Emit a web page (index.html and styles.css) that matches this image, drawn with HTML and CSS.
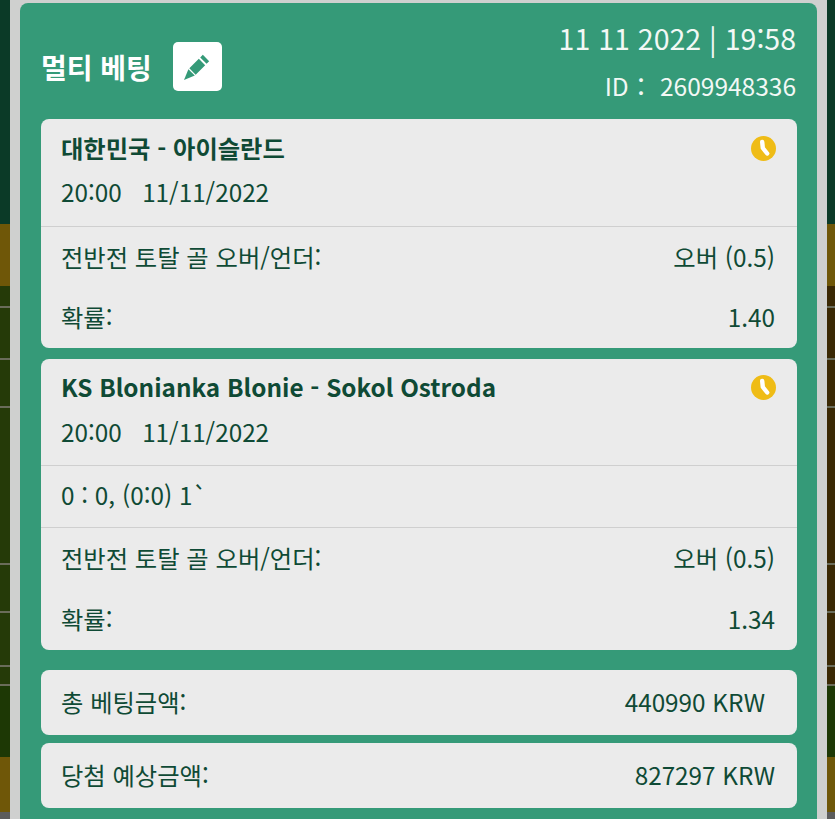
FILE: index.html
```html
<!DOCTYPE html>
<html lang="ko">
<head>
	<meta charset="UTF-8">
	<title>멀티 베팅</title>
	<link rel="stylesheet" href="styles.css">
</head>
<body>
	<div class="modal">
		<div class="ticket">
			<div class="head">
				<div class="head-left">
					<h1 class="head-title">멀티 베팅</h1>
					<span class="edit-btn">
						<svg width="28" height="28" viewBox="0 0 28 28">
							<path d="M9.5 18.5L19 9M20.4 7.6L23 5" fill="none" stroke="#359a78" stroke-width="9"/>
							<path d="M5.4 16.2L11.8 22.6L1 27z" fill="#359a78"/>
						</svg>
					</span>
				</div>
				<div class="head-right">
					<div class="head-date">11 11 2022 | 19:58</div>
					<div class="head-id">ID：&nbsp;2609948336</div>
				</div>
			</div>

			<div class="card">
				<div class="match">
					<div class="match-top">
						<div class="match-name">대한민국 - 아이슬란드</div>
						<svg class="clock" width="25" height="25" viewBox="0 0 25 25"><circle cx="12.5" cy="12.5" r="12.5" fill="#efbc16"/><path d="M11.2 6L11.8 12L16.2 17.5" fill="none" stroke="#fff" stroke-width="4.4" stroke-linecap="round" stroke-linejoin="round"/></svg>
					</div>
					<div class="match-time">20:00 &nbsp; 11/11/2022</div>
				</div>
				<div class="rows">
					<div class="row"><span>전반전 토탈 골 오버/언더:</span><span>오버 (0.5)</span></div>
					<div class="row"><span>확률:</span><span>1.40</span></div>
				</div>
			</div>

			<div class="card">
				<div class="match">
					<div class="match-top">
						<div class="match-name">KS Blonianka Blonie - Sokol Ostroda</div>
						<svg class="clock" width="25" height="25" viewBox="0 0 25 25"><circle cx="12.5" cy="12.5" r="12.5" fill="#efbc16"/><path d="M11.2 6L11.8 12L16.2 17.5" fill="none" stroke="#fff" stroke-width="4.4" stroke-linecap="round" stroke-linejoin="round"/></svg>
					</div>
					<div class="match-time">20:00 &nbsp; 11/11/2022</div>
				</div>
				<div class="score">0 : 0, (0:0) 1`</div>
				<div class="rows">
					<div class="row"><span>전반전 토탈 골 오버/언더:</span><span>오버 (0.5)</span></div>
					<div class="row"><span>확률:</span><span>1.34</span></div>
				</div>
			</div>

			<div class="total total-first"><span>총 베팅금액:</span><span class="total-stake">440990 KRW</span></div>
			<div class="total"><span>당첨 예상금액:</span><span>827297 KRW</span></div>
		</div>
	</div>
</body>
</html>
```

FILE: styles.css
```css
html, body {
	margin: 0;
	height: 100%;
}
body {
	overflow: hidden;
	font-family: "Noto Sans CJK KR", "Noto Sans", sans-serif;
	color: #0f4a35;
	/* the pitch behind the dialog: white lines, then left and right strips */
	background:
		linear-gradient(to bottom,
			transparent 306px, #6a6c5a 306px, #6a6c5a 308px,
			transparent 308px, transparent 358px, #6a6c5a 358px, #6a6c5a 360px,
			transparent 360px, transparent 406px, #6a6c5a 406px, #6a6c5a 408px,
			transparent 408px, transparent 563px, #6a6c5a 563px, #6a6c5a 565px,
			transparent 565px, transparent 611px, #6a6c5a 611px, #6a6c5a 613px,
			transparent 613px, transparent 665px, #6a6c5a 665px, #6a6c5a 667px,
			transparent 667px, transparent 684px, #6a6c5a 684px, #6a6c5a 686px,
			transparent 686px),
		linear-gradient(to bottom,
			#0b3a27 0, #0b3a27 224px,
			#6f5708 224px, #6f5708 286px,
			#253a08 286px, #253a08 685px,
			#1d3805 685px, #1d3805 757px,
			#6f5708 757px, #6f5708 812px,
			#5c5c5c 812px) left top / 10px 100% no-repeat,
		linear-gradient(to bottom,
			#0b3a27 0, #0b3a27 224px,
			#6f5708 224px, #6f5708 286px,
			#3a2803 286px, #3a2803 685px,
			#1d3805 685px, #1d3805 757px,
			#6f5708 757px, #6f5708 812px,
			#5c5c5c 812px) right top / 8px 100% no-repeat;
}
.modal {
	box-sizing: border-box;
	margin: 0 8px 0 10px;
	padding: 3px 10px 0;
	height: 100%;
	background: #cfd0cf;
}
.ticket {
	box-sizing: border-box;
	height: 100%;
	padding: 0 20px 0 21px;
	border-radius: 8px 8px 0 0;
	background: #359a78;
}
.head {
	display: flex;
	justify-content: space-between;
	height: 116px;
}
.head-left {
	display: flex;
	align-items: center;
	gap: 21px;
	padding-top: 11px;
}
.head-title {
	margin: 0;
	font-size: 28px;
	font-weight: 700;
	color: #fff;
}
.edit-btn {
	display: flex;
	align-items: center;
	justify-content: center;
	width: 49px;
	height: 49px;
	border-radius: 5px;
	background: #fff;
}
.head-right {
	padding: 14px 1px 0 0;
	text-align: right;
	color: #f2f8f5;
}
.head-date {
	font-size: 28.5px;
	line-height: 42px;
}
.head-id {
	margin-top: 9px;
	font-size: 24.5px;
	line-height: 36px;
}
.card {
	margin-bottom: 10.75px;
	border-radius: 8px;
	background: #ebebeb;
	font-size: 24.3px;
}
.match {
	height: 106.5px;
	box-sizing: border-box;
	padding: 8px 21px 0 20px;
}
.match-top {
	display: flex;
	justify-content: space-between;
	align-items: center;
	height: 40px;
	margin-bottom: 2px;
}
.match-name {
	font-weight: 700;
}
.clock {
	margin-top: 2px;
}
.match-time {
	height: 46px;
	line-height: 46px;
}
.score {
	height: 61px;
	padding-left: 20px;
	line-height: 58px;
	border-top: 1px solid #cfcfcf;
}
.rows {
	border-top: 1px solid #cfcfcf;
}
.row {
	display: flex;
	justify-content: space-between;
	height: 60.75px;
	padding: 0 22px 0 20px;
	line-height: 59px;
}
.total {
	display: flex;
	justify-content: space-between;
	height: 65px;
	margin-bottom: 8px;
	padding: 0 22px 0 20px;
	border-radius: 8px;
	background: #ebebeb;
	font-size: 24.3px;
	line-height: 64px;
}
.total-first {
	margin-top: 20.25px;
}
.total-stake {
	margin-right: 10px;
}
```
